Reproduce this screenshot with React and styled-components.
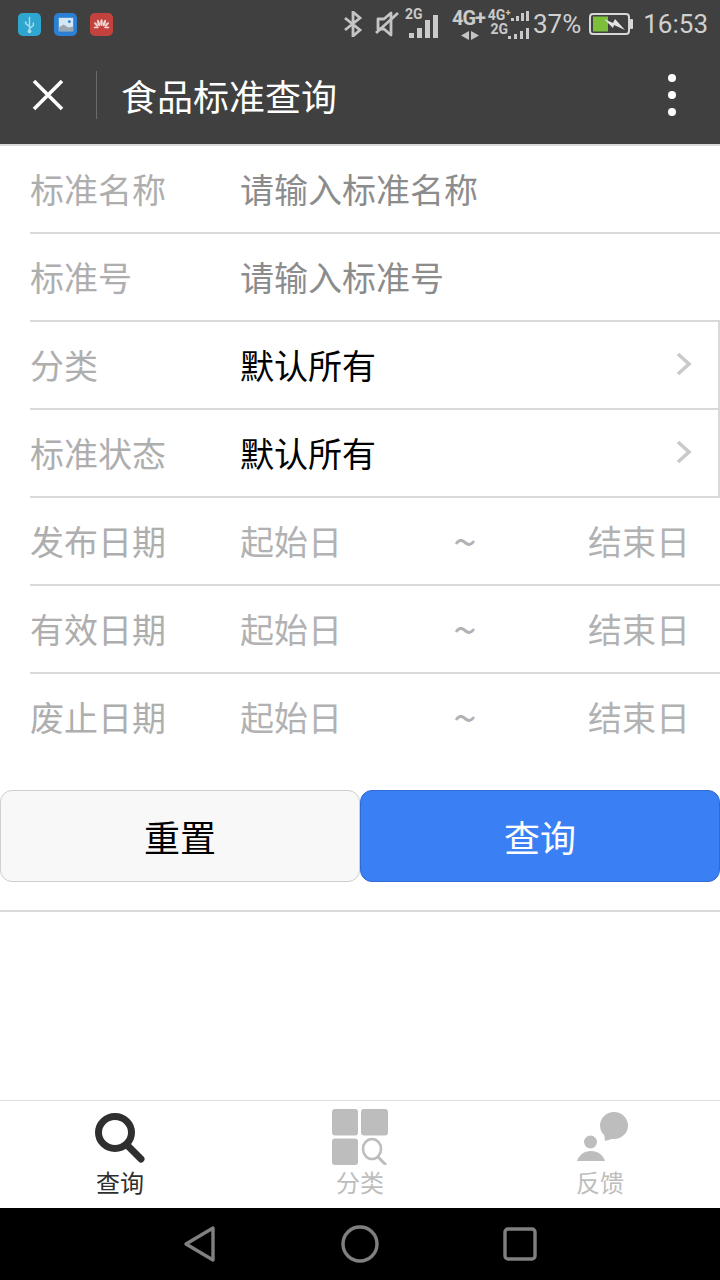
import React from 'react'
import styled, { createGlobalStyle } from 'styled-components'

const GlobalStyle = createGlobalStyle`
  html, body {
    margin: 0;
    padding: 0;
    background: #fff;
  }
  * {
    box-sizing: border-box;
  }
`

const UsbIcon = () => (
  <svg width="23" height="23" viewBox="0 0 24 24">
    <rect width="24" height="24" rx="5" fill="#2fa6cf" />
    <path d="M12 4v16M12 14l-4-3V8.500M12 16l4-3v-3" stroke="#a6dcec" strokeWidth="1.500" fill="none" />
    <circle cx="12" cy="19" r="2" fill="#a6dcec" />
  </svg>
)

const GalleryIcon = () => (
  <svg width="23" height="23" viewBox="0 0 24 24">
    <rect width="24" height="24" rx="5" fill="#2b7fd4" />
    <rect x="5" y="5" width="15" height="14" fill="#d5e6f5" />
    <path d="M5 19v-4l5-3 5 3 5-1v5z" fill="#9aa7ae" />
    <circle cx="16" cy="9" r="1.500" fill="#2b7fd4" />
  </svg>
)

const HuaweiIcon = () => (
  <svg width="23" height="23" viewBox="0 0 24 24">
    <rect width="24" height="24" rx="5" fill="#c4423d" />
    <g fill="#eed5d3">
      <ellipse cx="12" cy="10" rx="1.300" ry="3.500" />
      <ellipse cx="9" cy="10.500" rx="1.300" ry="3.500" transform="rotate(-18 9 10.500)" />
      <ellipse cx="15" cy="10.500" rx="1.300" ry="3.500" transform="rotate(18 15 10.500)" />
      <ellipse cx="6.500" cy="12" rx="1.200" ry="3" transform="rotate(-45 6.500 12)" />
      <ellipse cx="17.500" cy="12" rx="1.200" ry="3" transform="rotate(45 17.500 12)" />
      <ellipse cx="6.500" cy="15" rx="2.800" ry="1" />
      <ellipse cx="17.500" cy="15" rx="2.800" ry="1" />
    </g>
  </svg>
)

const BluetoothIcon = () => (
  <svg width="20" height="26" viewBox="0 0 20 26">
    <path d="M2 7l15 12-7 6V1l7 6L2 19" stroke="#c4c4c4" strokeWidth="2.800" fill="none" />
  </svg>
)

const MuteIcon = () => (
  <svg width="26" height="26" viewBox="0 0 26 26">
    <path d="M4 8h6l7-6v22l-7-6H4z" stroke="#c4c4c4" strokeWidth="2.800" fill="none" strokeLinejoin="round" />
    <path d="M2 22L24 2" stroke="#c4c4c4" strokeWidth="2.800" />
  </svg>
)

const ArrowsIcon = () => (
  <svg width="18" height="9" viewBox="0 0 18 9">
    <path d="M0 4.500L8 0v9zM10 0l8 4.500-8 4.500z" fill="#c4c4c4" />
  </svg>
)

const SignalBars = ({ h, w, gap }) => (
  <SignalRow $gap={gap}>
    {h.map((v, i) => (
      <SignalBar key={i} $w={w} $h={v} />
    ))}
  </SignalRow>
)

const BatteryIcon = () => (
  <svg width="46" height="22" viewBox="0 0 46 22">
    <rect x="1" y="1" width="39" height="20" rx="3" stroke="#d8d8d8" strokeWidth="2" fill="none" />
    <rect x="4" y="3.500" width="15" height="15" fill="#7cbf3a" />
    <path d="M15 6l9 4 2-4 10 11-11-5-1 3z" fill="#e4e4e4" />
    <rect x="41" y="6" width="3" height="10" rx="1" fill="#d8d8d8" />
  </svg>
)

const CloseIcon = () => (
  <svg width="32" height="32" viewBox="0 0 32 32">
    <path d="M2 2l28 28M30 2L2 30" stroke="#fff" strokeWidth="3.600" />
  </svg>
)

const ChevronIcon = () => (
  <svg width="16" height="24" viewBox="0 0 16 24">
    <path d="M2 2l11 10L2 22" stroke="#c9c9c9" strokeWidth="3.600" fill="none" />
  </svg>
)

const SearchTab = () => (
  <svg width="52" height="53" viewBox="0 0 52 53">
    <ellipse cx="21" cy="20.500" rx="16.500" ry="16" stroke="#2f2f2f" strokeWidth="7" fill="none" />
    <path d="M33 33l14 14" stroke="#2f2f2f" strokeWidth="7" strokeLinecap="round" />
  </svg>
)

const CategoryTab = () => (
  <svg width="56" height="56" viewBox="0 0 56 56">
    <rect width="26" height="26.500" rx="3" fill="#bdbdbd" />
    <rect x="29" width="27" height="26.500" rx="3" fill="#bdbdbd" />
    <rect y="29.500" width="26" height="26.500" rx="3" fill="#bdbdbd" />
    <ellipse cx="40" cy="40" rx="9" ry="10" stroke="#bdbdbd" strokeWidth="2.600" fill="none" />
    <path d="M46 48l8 8" stroke="#bdbdbd" strokeWidth="3" />
  </svg>
)

const FeedbackTab = () => (
  <svg width="56" height="53" viewBox="0 0 56 53">
    <ellipse cx="42" cy="13.500" rx="14" ry="13.500" fill="#bdbdbd" />
    <path d="M32 21l1 8 10-3z" fill="#bdbdbd" />
    <ellipse cx="18.500" cy="30" rx="6.500" ry="6.500" fill="#bdbdbd" />
    <path d="M5 49c2-6 7-10 14-10s12 4 14 10z" fill="#bdbdbd" />
  </svg>
)

const BackKey = () => (
  <svg width="34" height="38" viewBox="0 0 34 38">
    <path d="M30 3v32L3 19z" stroke="#808080" strokeWidth="3.400" fill="none" strokeLinejoin="round" />
  </svg>
)

const HomeKey = () => (
  <svg width="38" height="38" viewBox="0 0 38 38">
    <circle cx="19" cy="19" r="17" stroke="#808080" strokeWidth="3.400" fill="none" />
  </svg>
)

const RecentKey = () => (
  <svg width="34" height="34" viewBox="0 0 34 34">
    <rect x="2" y="2" width="30" height="30" rx="3" stroke="#808080" strokeWidth="3.400" fill="none" />
  </svg>
)

const dateRows = ['发布日期', '有效日期', '废止日期']

const App = () => {
  return (
    <Page>
      <GlobalStyle />
      <StatusBar>
        <NotifyIcons>
          <UsbIcon />
          <GalleryIcon />
          <HuaweiIcon />
        </NotifyIcons>
        <StatusIcons>
          <BluetoothIcon />
          <MuteSlot>
            <MuteIcon />
          </MuteSlot>
          <NetBlock>
            <TinyLabel>2G</TinyLabel>
            <NetBars>
              <SignalBars h={[5, 10, 18, 23]} w={5} gap={3} />
            </NetBars>
          </NetBlock>
          <BigNet>
            <BigNetText>4G+</BigNetText>
            <ArrowsIcon />
          </BigNet>
          <DualSignal>
            <DualRow>
              <TinyLabel>4G⁺</TinyLabel>
              <SignalBars h={[3, 5, 8, 10]} w={3} gap={2} />
            </DualRow>
            <DualRow>
              <LowLabel>2G</LowLabel>
              <SignalBars h={[3, 5, 8, 11]} w={3} gap={3} />
            </DualRow>
          </DualSignal>
          <StatusText>37%</StatusText>
          <BatterySlot>
            <BatteryIcon />
          </BatterySlot>
          <StatusClock>16:53</StatusClock>
        </StatusIcons>
      </StatusBar>

      <NavBar>
        <CloseButton>
          <CloseIcon />
        </CloseButton>
        <NavTitle>食品标准查询</NavTitle>
        <MoreDots>
          <i />
          <i />
          <i />
        </MoreDots>
      </NavBar>

      <Form>
        <Row>
          <Label>标准名称</Label>
          <Placeholder>请输入标准名称</Placeholder>
        </Row>
        <Row>
          <Label>标准号</Label>
          <Placeholder>请输入标准号</Placeholder>
        </Row>
        <SelectGroup>
          <Row>
            <Label>分类</Label>
            <Value>默认所有</Value>
            <ChevronIcon />
          </Row>
          <Row>
            <Label>标准状态</Label>
            <Value>默认所有</Value>
            <ChevronIcon />
          </Row>
        </SelectGroup>
        {dateRows.map((label) => (
          <Row key={label}>
            <Label>{label}</Label>
            <DateGrid>
              <DateText>起始日</DateText>
              <Tilde>~</Tilde>
              <DateEnd>结束日</DateEnd>
            </DateGrid>
          </Row>
        ))}
      </Form>

      <Buttons>
        <ResetButton>重置</ResetButton>
        <SearchButton>查询</SearchButton>
      </Buttons>
      <Divider />
      <Spacer />

      <TabBar>
        <Tab $active>
          <TabIcon><SearchTab /></TabIcon>
          查询
        </Tab>
        <Tab>
          <TabIcon><CategoryTab /></TabIcon>
          分类
        </Tab>
        <Tab>
          <TabIcon><FeedbackTab /></TabIcon>
          反馈
        </Tab>
      </TabBar>

      <SystemNav>
        <BackKey />
        <HomeKey />
        <RecentKey />
      </SystemNav>
    </Page>
  )
}

const Page = styled.div`
  display: flex;
  flex-direction: column;
  width: 720px;
  height: 1280px;
  overflow: hidden;
  font-family: "Noto Sans CJK SC", "Liberation Sans", sans-serif;
`
const StatusBar = styled.div`
  display: flex;
  align-items: center;
  justify-content: space-between;
  height: 48px;
  padding: 0 12px 0 18px;
  background: #404040;
  color: #d6d6d6;
`
const NotifyIcons = styled.div`
  display: flex;
  gap: 13px;
`
const StatusIcons = styled.div`
  display: flex;
  align-items: center;
`
const MuteSlot = styled.div`
  display: flex;
  margin: 0 5px 0 11px;
`
const NetBlock = styled.div`
  display: flex;
  flex-direction: column;
  width: 34px;
  margin-bottom: 3px;
`
const NetBars = styled.div`
  margin: -5px 0 0 4px;
`
const TinyLabel = styled.span`
  font-family: Roboto, sans-serif;
  font-weight: 700;
  font-size: 14px;
  line-height: 12px;
  color: #cacaca;
`
const LowLabel = styled(TinyLabel)`
  margin-bottom: 4px;
`
const SignalRow = styled.div`
  display: flex;
  align-items: flex-end;
  gap: ${(p) => p.$gap}px;
`
const SignalBar = styled.div`
  width: ${(p) => p.$w}px;
  height: ${(p) => p.$h}px;
  background: #cacaca;
`
const BigNet = styled.div`
  display: flex;
  flex-direction: column;
  align-items: center;
  gap: 3px;
  width: 37px;
  margin-left: 13px;
`
const BigNetText = styled.span`
  margin-right: 4px;
  font-family: Roboto, sans-serif;
  font-weight: 700;
  font-size: 20px;
  line-height: 20px;
  letter-spacing: -1px;
  white-space: nowrap;
  color: #cacaca;
`
const DualSignal = styled.div`
  display: flex;
  flex-direction: column;
  gap: 2px;
  width: 40px;
`
const DualRow = styled.div`
  display: flex;
  align-items: flex-end;
  justify-content: flex-end;
`
const StatusText = styled.span`
  margin-left: 4px;
  font-family: Roboto, sans-serif;
  font-size: 26px;
  color: #d0d0d0;
`
const BatterySlot = styled.div`
  display: flex;
  margin-left: 8px;
`
const StatusClock = styled(StatusText)`
  margin-left: 8px;
`
const NavBar = styled.div`
  display: flex;
  align-items: center;
  height: 98px;
  background: #404040;
  border-bottom: 2px solid #d9d9d9;
  padding-bottom: 2px;
`
const CloseButton = styled.div`
  display: flex;
  align-items: center;
  justify-content: center;
  width: 97px;
  height: 48px;
  border-right: 1px solid #6a6a6a;
`
const NavTitle = styled.div`
  flex: 1;
  margin-left: 24px;
  font-size: 36px;
  color: #fff;
`
const MoreDots = styled.div`
  display: flex;
  flex-direction: column;
  align-items: center;
  gap: 9px;
  margin-right: 44px;

  i {
    display: block;
    width: 8px;
    height: 8px;
    border-radius: 50%;
    background: #fff;
  }
`
const Form = styled.div`
  padding-left: 30px;
`
const SelectGroup = styled.div`
  border-right: 2px solid #d9d9d9;
`
const Row = styled.div`
  display: flex;
  align-items: center;
  height: 88px;
  padding: 0 26px 2px 0;
  border-bottom: 2px solid #d9d9d9;

  ${Form} > &:last-child {
    border-bottom-color: transparent;
  }
`
const Label = styled.div`
  width: 210px;
  flex-shrink: 0;
  font-size: 34px;
  color: #aeaeae;
`
const Placeholder = styled.div`
  flex: 1;
  font-size: 34px;
  color: #8c8c8c;
`
const Value = styled.div`
  flex: 1;
  font-size: 34px;
  color: #000;
`
const DateGrid = styled.div`
  flex: 1;
  display: grid;
  grid-template-columns: 1fr 1fr 1fr;
  align-items: center;
  padding-right: 4px;
`
const DateText = styled.div`
  font-size: 34px;
  color: #b2b2b2;
`
const Tilde = styled(DateText)`
  font-size: 42px;
  line-height: 1;
  text-align: center;
`
const DateEnd = styled(DateText)`
  text-align: right;
`
const Buttons = styled.div`
  display: flex;
  margin-top: 28px;
`
const ResetButton = styled.button`
  width: 360px;
  height: 92px;
  padding: 0;
  font-family: inherit;
  font-size: 36px;
  color: #000;
  background: #f8f8f8;
  border: 1px solid #cfcfcf;
  border-radius: 12px;
`
const SearchButton = styled(ResetButton)`
  color: #fff;
  background: #3a7ff4;
  border-color: #2f6bd0;
`
const Divider = styled.div`
  height: 2px;
  margin-top: 28px;
  background: #d9d9d9;
`
const Spacer = styled.div`
  flex: 1;
`
const TabBar = styled.div`
  display: flex;
  height: 108px;
  border-top: 1px solid #dedede;
  background: #fff;
`
const Tab = styled.div`
  flex: 1;
  display: flex;
  flex-direction: column;
  align-items: center;
  font-size: 24px;
  line-height: 30px;
  color: ${(p) => (p.$active ? '#2f2f2f' : '#bdbdbd')};
`
const TabIcon = styled.div`
  display: flex;
  align-items: flex-end;
  justify-content: center;
  height: 64px;
  margin-bottom: 2px;
`
const SystemNav = styled.div`
  display: flex;
  align-items: center;
  justify-content: center;
  gap: 124px;
  height: 72px;
  background: #000;
`

export default App
